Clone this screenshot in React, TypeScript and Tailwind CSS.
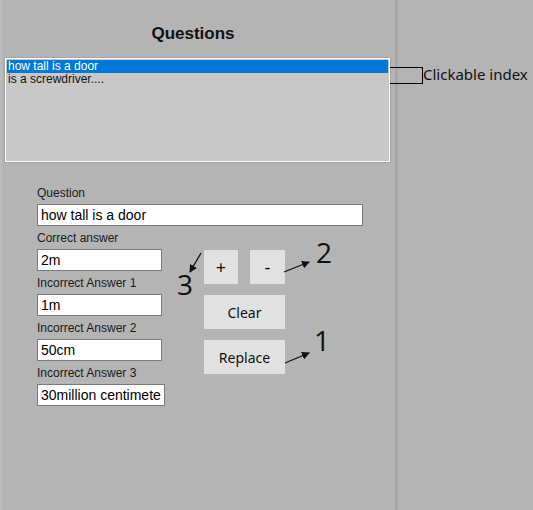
import { useState } from "react";

const Field = ({ label, value, wide }: { label: string; value: string; wide?: string }) => {
  return (
    <div className="flex flex-col">
      <div className="h-[23px] pt-[5px] text-[12px] leading-[14px] text-[#1a1a1a]">{label}</div>
      <input
        readOnly
        value={value}
        className={`${wide} h-[22px] border border-[#7a7a7a] bg-white px-[3px] text-[14px] leading-[20px] text-black outline-none`}
      />
    </div>
  );
};

const App = () => {
  const [selected, setSelected] = useState(0);
  const items = ["how tall is a door", "is a screwdriver...."];

  return (
    <div className="relative flex h-[510px] w-[533px] bg-[#b4b4b4] font-['Liberation_Sans',Arial,sans-serif]">
      <div className="flex w-[395px] flex-col border-l-2 border-[#bcbcbc] pl-[3px]">
        <div className="pt-[24px] pr-[14px] text-center text-[17px] font-bold leading-[20px] text-[#111]">
          Questions
        </div>
        <div className="mt-[14px] h-[104px] w-[385px] border border-white bg-[#c8c8c8] p-px shadow-[0_0_0_1px_#a4a4a4]">
          {items.map((item, i) => (
            <div
              key={item}
              onClick={() => setSelected(i)}
              className={`h-[13px] cursor-pointer pl-[1px] text-[12px] leading-[13px] ${
                i === selected ? "bg-[#0078d7] text-white" : "text-[#111]"
              }`}
            >
              {item}
            </div>
          ))}
        </div>

        <div className="mt-[19px] flex flex-col pl-[32px]">
          <Field label="Question" value="how tall is a door" wide="w-[326px]" />
          <div className="flex">
            <div className="flex flex-col">
              <Field label="Correct answer" value="2m" wide="w-[125px]" />
              <Field label="Incorrect Answer 1" value="1m" wide="w-[125px]" />
              <Field label="Incorrect Answer 2" value="50cm" wide="w-[125px]" />
              <Field label="Incorrect Answer 3" value="30million centimeters" wide="w-[128px]" />
            </div>
            <div className="ml-[39px] mt-[24px] flex w-[81px] flex-col gap-[11px] font-['Noto_Sans',sans-serif] text-[14px] text-[#111]">
              <div className="flex gap-[12px]">
                <button className="h-[34px] w-[34px] bg-[#e1e1e1] text-[18px]">+</button>
                <button className="h-[34px] w-[35px] bg-[#e1e1e1] text-[18px]">-</button>
              </div>
              <button className="h-[34px] w-[81px] bg-[#e1e1e1]">Clear</button>
              <button className="h-[34px] w-[81px] bg-[#e1e1e1]">Replace</button>
            </div>
          </div>
        </div>
      </div>
      <div className="w-[3px] bg-[#a6a6a6]" />
      <div className="flex-1" />

      {/* annotations */}
      <div className="absolute left-[390px] top-[67px] h-[17px] w-[33px] border border-l-0 border-black" />
      <div className="absolute left-[423px] top-[64px] font-['Noto_Sans',sans-serif] text-[15px] leading-[20px] text-[#111]">
        Clickable index
      </div>
      <div className="absolute left-[177px] top-[268px] font-['Open_Sans',sans-serif] text-[28px] leading-[32px] text-[#111]">3</div>
      <div className="absolute left-[316px] top-[236px] font-['Open_Sans',sans-serif] text-[28px] leading-[32px] text-[#111]">2</div>
      <div className="absolute left-[314px] top-[324px] font-['Open_Sans',sans-serif] text-[28px] leading-[32px] text-[#111]">1</div>
      <svg className="absolute left-0 top-0" width="533" height="510" viewBox="0 0 533 510">
        <defs>
          <marker id="ah" markerWidth="8" markerHeight="8" refX="7" refY="4" orient="auto" markerUnits="userSpaceOnUse">
            <path d="M0 0 L8 4 L0 8 Z" fill="#111" />
          </marker>
        </defs>
        <line x1="201" y1="253" x2="190" y2="272" stroke="#111" strokeWidth="1.3" markerEnd="url(#ah)" />
        <line x1="284" y1="272" x2="309" y2="262" stroke="#111" strokeWidth="1.3" markerEnd="url(#ah)" />
        <line x1="285" y1="363" x2="309" y2="353" stroke="#111" strokeWidth="1.3" markerEnd="url(#ah)" />
      </svg>
    </div>
  );
};

export default App;
